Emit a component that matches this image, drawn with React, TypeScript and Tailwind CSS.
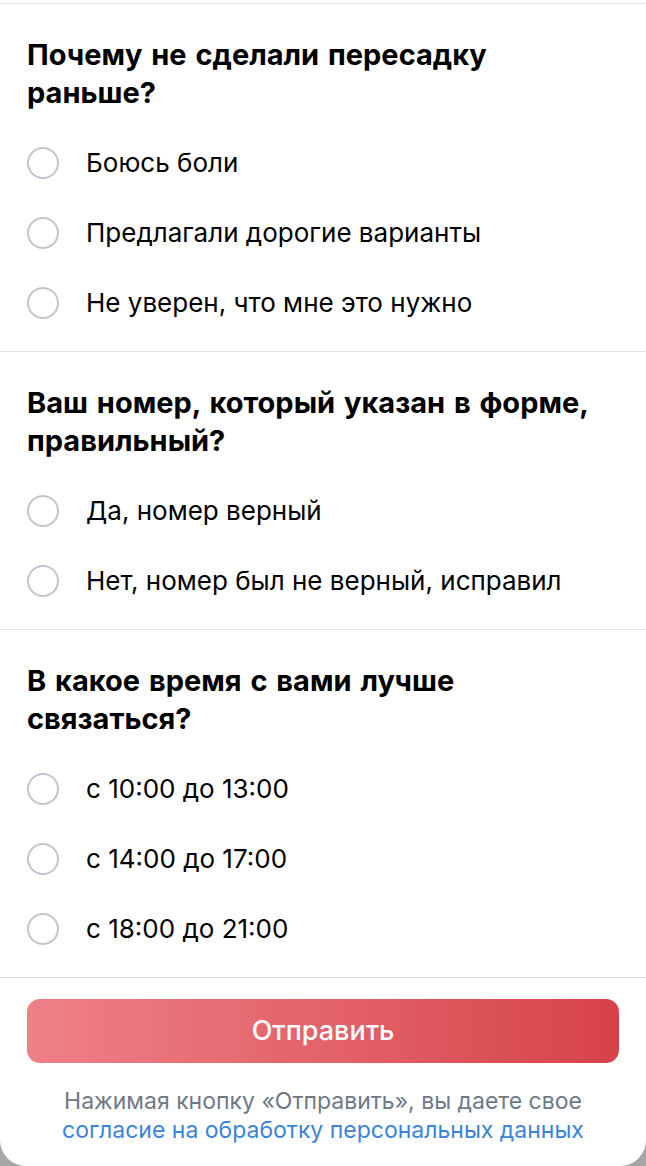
import { useState } from "react"

type Question = {
  id: string
  title: string
  options: string[]
}

const questions: Question[] = [
  {
    id: "why",
    title: "Почему не сделали пересадку раньше?",
    options: ["Боюсь боли", "Предлагали дорогие варианты", "Не уверен, что мне это нужно"],
  },
  {
    id: "phone",
    title: "Ваш номер, который указан в форме, правильный?",
    options: ["Да, номер верный", "Нет, номер был не верный, исправил"],
  },
  {
    id: "time",
    title: "В какое время с вами лучше связаться?",
    options: ["с 10:00 до 13:00", "с 14:00 до 17:00", "с 18:00 до 21:00"],
  },
]

function Radio({ checked }: { checked: boolean }) {
  return (
    <span className="flex h-[32px] w-[32px] shrink-0 items-center justify-center rounded-full border-2 border-[#bfc5ce]">
      {checked && <span className="h-[16px] w-[16px] rounded-full bg-[#d6424a]" />}
    </span>
  )
}

export default function App() {
  const [answers, setAnswers] = useState<Record<string, string>>({})

  return (
    <div className="min-h-[1166px] bg-[#a6a6a6] font-['Inter','Noto_Sans',sans-serif] text-black">
      <div className="flex min-h-[1166px] flex-col rounded-b-[26px] bg-white">
        <div className="h-[4px] border-b border-[#e2e2e2]" />

        {questions.map((q) => (
          <section key={q.id} className="border-b border-[#e2e2e2] px-[27px] pt-[32px] pb-[13px]">
            <h2 className="mb-[16px] pr-[16px] text-[29px] leading-[38px] font-bold [word-spacing:2px]">
              {q.title}
            </h2>
            <div className="flex flex-col">
              {q.options.map((opt) => (
                <label
                  key={opt}
                  className="flex h-[70px] cursor-pointer items-center gap-[27px]"
                  onClick={() => setAnswers((a) => ({ ...a, [q.id]: opt }))}
                >
                  <Radio checked={answers[q.id] === opt} />
                  <span className="text-[26px] leading-[30px]">{opt}</span>
                </label>
              ))}
            </div>
          </section>
        ))}

        <div className="px-[27px] pt-[21px] pb-[18px]">
          <button className="flex h-[64px] w-full items-center justify-center rounded-[13px] bg-gradient-to-r from-[#ef8088] to-[#d6414a] text-[27px] font-medium text-white">
            Отправить
          </button>
          <p className="mt-[24px] text-center text-[23px] leading-[29px] text-[#6e7986]">
            Нажимая кнопку «Отправить», вы даете свое
            <br />
            <a className="text-[#3a84d9]">согласие на обработку персональных данных</a>
          </p>
        </div>
      </div>
    </div>
  )
}
